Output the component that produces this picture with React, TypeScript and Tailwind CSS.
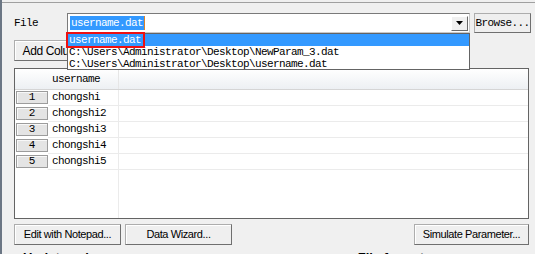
import React from 'react'

const mono = { fontFamily: '"Liberation Mono", "DejaVu Sans Mono", monospace' }
const sans = { fontFamily: '"Liberation Sans", Arial, sans-serif' }

const rows = ['chongshi', 'chongshi2', 'chongshi3', 'chongshi4', 'chongshi5']

const history = [
  'username.dat',
  'C:\\Users\\Administrator\\Desktop\\NewParam_3.dat',
  'C:\\Users\\Administrator\\Desktop\\username.dat',
]

function WinButton({ label, className = '' }: { label: string; className?: string }) {
  return (
    <div
      className={`h-[21px] flex items-center justify-center bg-[#efefef] border border-[#adadad] border-r-[#6f6f6f] border-b-[#6f6f6f] shadow-[inset_1px_1px_0_#ffffff] text-[11px] tracking-[-0.4px] text-black ${className}`}
      style={sans}
    >
      {label}
    </div>
  )
}

export default function App() {
  return (
    <div className="relative w-[535px] h-[254px] overflow-hidden bg-[#f0f0f0] border-l-2 border-[#6b7684]" style={mono}>
      {/* frame line */}
      <div className="mt-[2px] border-t border-[#a0a0a0]" />

      <div className="pl-[12px] pr-[4px]">
        {/* file row */}
        <div className="mt-[10px] h-[20px] flex items-center">
          <div className="w-[53px] text-[11px] tracking-[-0.6px] text-black">File</div>
          <div className="w-[403px] h-[20px] flex items-center bg-white border border-[#7a7a7a] border-r-[#c8c8c8] border-b-[#c8c8c8]">
            <div className="ml-[2px] h-[14px] flex items-center bg-[#3399ff] text-white text-[11px] tracking-[-0.6px] px-[1px]">
              username.dat
            </div>
            <div className="w-[1px] h-[14px] bg-[#d9822b]" />
            <div className="flex-1" />
            <div className="mr-[1px] w-[17px] h-[15px] flex items-center justify-center bg-[#f0f0f0] border border-white border-r-[#696969] border-b-[#696969]">
              <svg width="8" height="5" viewBox="0 0 8 5">
                <path d="M0 0 H7 L3.5 4 Z" fill="#000" />
              </svg>
            </div>
          </div>
          <div
            className="ml-[4px] w-[57px] h-[20px] flex items-center justify-center bg-[#efefef] border border-[#adadad] border-r-[#6f6f6f] border-b-[#6f6f6f] text-[11px] tracking-[-0.6px] text-black"
          >
            Browse...
          </div>
        </div>

        {/* add column */}
        <WinButton label="Add Column..." className="mt-[7px] w-[88px] text-[12px]" />

        {/* grid */}
        <div className="mt-[7px] w-[515px] h-[151px] flex flex-col bg-white border border-[#646464]">
          <div className="h-[21px] flex bg-gradient-to-b from-white to-[#edf0f3] border-b border-[#d5d5d5]">
            <div className="w-[33px]" />
            <div className="w-[71px] border-r border-[#e6e6e6] pl-[4px] flex items-center text-[11px] tracking-[-0.6px] text-black">
              username
            </div>
          </div>
          {rows.map((r, i) => (
            <div key={r} className="h-[16px] flex">
              <div className="w-[33px] pl-[1px] pt-[1px]">
                <div className="w-[32px] h-[13px] flex items-center justify-center bg-[#e4e4e4] border border-[#9c9c9c] shadow-[inset_1px_1px_0_#f8f8f8] text-[11px] text-black">
                  {i + 1}
                </div>
              </div>
              <div className="w-[71px] border-r border-b border-[#ebebeb] pl-[4px] flex items-center text-[11px] tracking-[-0.6px] text-black">
                {r}
              </div>
              <div className="flex-1 border-b border-[#ebebeb]" />
            </div>
          ))}
          <div className="flex-1 flex">
            <div className="w-[104px] border-r border-[#ebebeb]" />
          </div>
        </div>

        {/* bottom buttons */}
        <div className="mt-[5px] flex">
          <WinButton label="Edit with Notepad..." className="w-[107px]" />
          <WinButton label="Data Wizard..." className="ml-[4px] w-[107px]" />
          <div className="flex-1" />
          <WinButton label="Simulate Parameter..." className="mr-[2px] w-[115px]" />
        </div>

        {/* next section, cut off by the window edge */}
        <div className="mt-[6px] flex text-[13px] font-bold leading-none text-black" style={sans}>
          <div className="ml-[9px]">Update value on:</div>
          <div className="ml-[230px]">File format</div>
        </div>
      </div>

      {/* open dropdown list */}
      <div className="absolute left-[65px] top-[33px] w-[403px] h-[37px] bg-white border border-[#646464] flex flex-col text-[11px] tracking-[-0.6px] text-black">
        {history.map((h, i) => (
          <div key={h} className={`h-[12px] pl-[1px] flex items-center ${i === 0 ? 'bg-[#3399ff] text-white' : ''}`}>
            {h}
          </div>
        ))}
      </div>

      {/* highlight marker */}
      <div className="absolute left-[64px] top-[32px] w-[79px] h-[16px] border-2 border-[#ee1111]" />
    </div>
  )
}
